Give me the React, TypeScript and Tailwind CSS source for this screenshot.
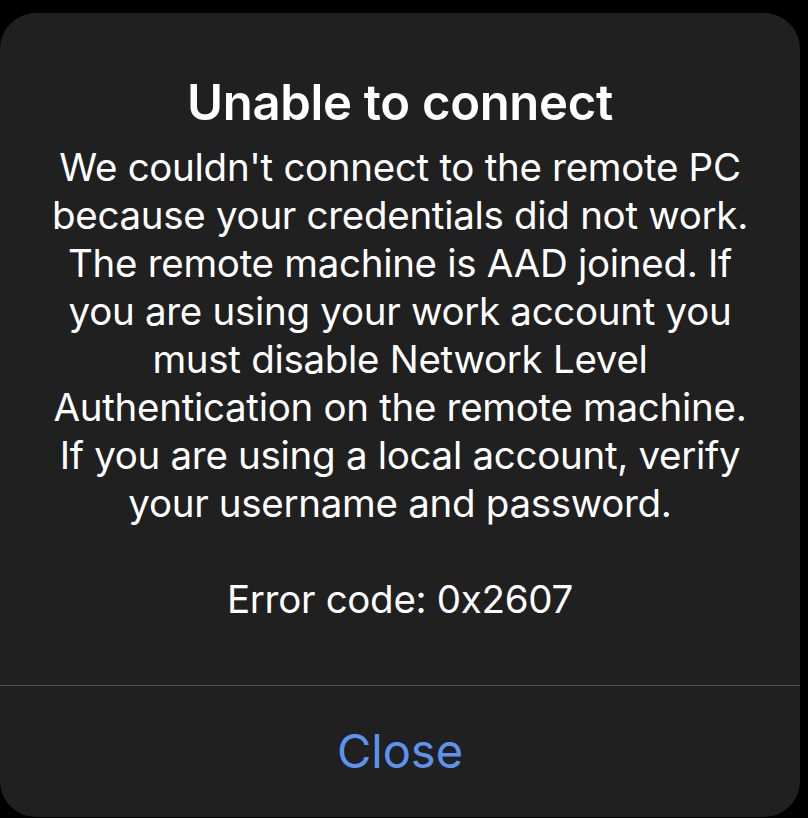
const lines = [
  "We couldn't connect to the remote PC",
  "because your credentials did not work.",
  "The remote machine is AAD joined. If",
  "you are using your work account you",
  "must disable Network Level",
  "Authentication on the remote machine.",
  "If you are using a local account, verify",
  "your username and password.",
];

export default function App() {
  return (
    <div className="w-[808px] h-[818px] bg-black overflow-hidden pt-[13px] font-['Inter','Noto_Sans',sans-serif]">
      <div className="w-[800px] h-[804px] bg-[#202020] rounded-[36px] flex flex-col">
        <div className="flex flex-col items-center text-center text-white pt-[64px] h-[672px]">
          <h1 className="text-[49px] leading-[52px] font-semibold tracking-[-0.3px]">Unable to connect</h1>
          <div className="mt-[14px] text-[38.5px] leading-[48px] tracking-[-0.3px] whitespace-nowrap">
            {lines.map((l) => (
              <div key={l}>{l}</div>
            ))}
          </div>
          <p className="mt-[48px] text-[38.5px] leading-[48px] tracking-[-0.3px]">Error code: 0x2607</p>
        </div>
        <div className="h-px bg-[#545454]" />
        <div className="flex-1 flex items-center justify-center pb-[2px]">
          <span className="text-[#5b93ef] text-[47px] leading-none">Close</span>
        </div>
      </div>
    </div>
  );
}
